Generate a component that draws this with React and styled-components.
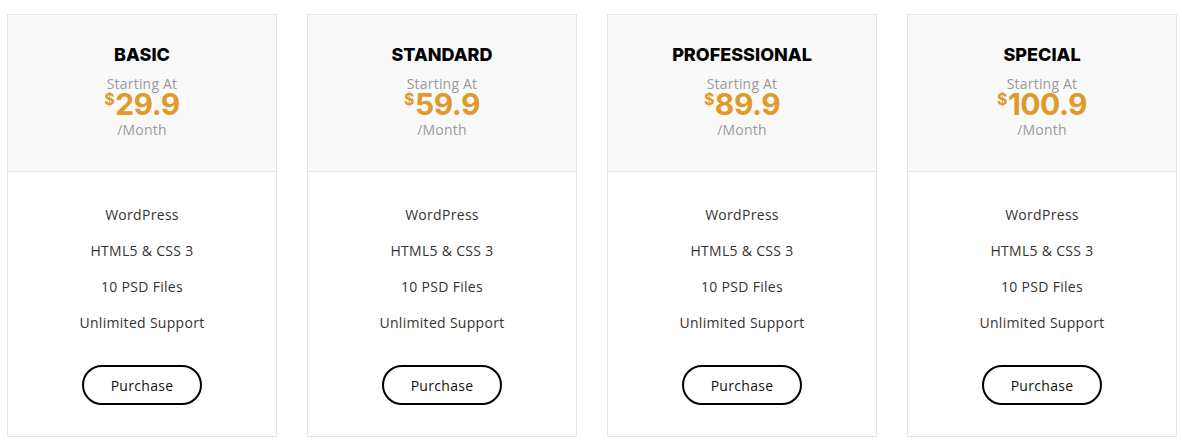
import React from "react";
import styled, { createGlobalStyle } from "styled-components";

const PLANS = [
    { name: "BASIC", price: "29.9" },
    { name: "STANDARD", price: "59.9" },
    { name: "PROFESSIONAL", price: "89.9" },
    { name: "SPECIAL", price: "100.9" },
];

const FEATURES = ["WordPress", "HTML5 & CSS 3", "10 PSD Files", "Unlimited Support"];

function App() {
    return (
        <>
            <GlobalStyle />
            <Pricing>
                {PLANS.map((plan) => (
                    <Card key={plan.name}>
                        <CardHead>
                            <PlanName>{plan.name}</PlanName>
                            <Muted $gap={1}>Starting At</Muted>
                            <Price>
                                <Currency>$</Currency>
                                {plan.price}
                            </Price>
                            <Muted $gap={6}>/Month</Muted>
                        </CardHead>
                        <CardBody>
                            <FeatureList>
                                {FEATURES.map((f) => (
                                    <Feature key={f}>{f}</Feature>
                                ))}
                            </FeatureList>
                            <Button>Purchase</Button>
                        </CardBody>
                    </Card>
                ))}
            </Pricing>
        </>
    );
}

export default App;

const GlobalStyle = createGlobalStyle`
    body {
        margin: 0;
        background: #fff;
        font-family: "Open Sans", "Liberation Sans", sans-serif;
    }
`;

const Pricing = styled.div`
    display: grid;
    grid-template-columns: repeat(4, 270px);
    gap: 30px;
    padding: 14px 0 0 7px;
`;

const Card = styled.div`
    border: 1px solid #e6e6e6;
    display: flex;
    flex-direction: column;
    height: 423px;
    box-sizing: border-box;
`;

const CardHead = styled.div`
    background: #f9f9f9;
    height: 157px;
    border-bottom: 1px solid #e6e6e6;
    display: flex;
    flex-direction: column;
    align-items: center;
    padding-top: 30px;
    box-sizing: border-box;
`;

const PlanName = styled.h3`
    margin: 0 0 10px;
    font-family: Inter, "Liberation Sans", sans-serif;
    font-size: 18px;
    font-weight: 800;
    color: #000;
    line-height: 20px;
`;

const Muted = styled.span`
    margin-top: ${(p) => p.$gap || 0}px;
    font-size: 14px;
    color: #999;
    line-height: 16px;
    letter-spacing: 0.2px;
`;

const Price = styled.div`
    display: flex;
    align-items: flex-start;
    font-family: Inter, "Liberation Sans", sans-serif;
    font-size: 30px;
    font-weight: 700;
    color: #e0992a;
    line-height: 24px;
    letter-spacing: -0.5px;
`;

const Currency = styled.span`
    font-size: 16px;
    line-height: 14px;
    margin-right: 1px;
`;

const CardBody = styled.div`
    flex: 1;
    display: flex;
    flex-direction: column;
    align-items: center;
    padding-top: 34px;
`;

const FeatureList = styled.ul`
    list-style: none;
    margin: 0;
    padding: 0;
    display: flex;
    flex-direction: column;
    align-items: center;
    gap: 18px;
`;

const Feature = styled.li`
    font-size: 14px;
    color: #333;
    line-height: 18px;
    letter-spacing: 0.3px;
`;

const Button = styled.button`
    margin-top: 33px;
    width: 120px;
    height: 40px;
    border: 2px solid #000;
    border-radius: 20px;
    background: #fff;
    font-family: "Open Sans", "Liberation Sans", sans-serif;
    font-size: 14px;
    letter-spacing: 0.3px;
    color: #111;
    cursor: pointer;
`;
